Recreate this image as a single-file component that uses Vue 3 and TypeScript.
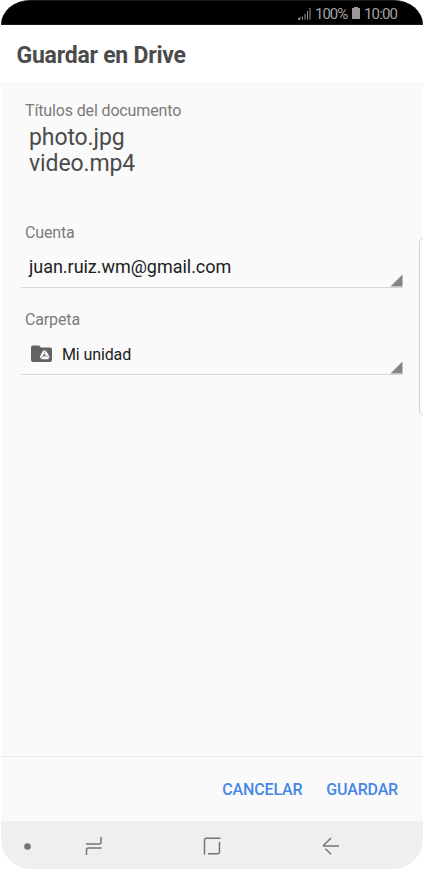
<script setup lang="ts">
const files: string[] = ['photo.jpg', 'video.mp4']
const account = 'juan.ruiz.wm@gmail.com'
const folder = 'Mi unidad'
</script>

<template>
  <div class="screen">
    <div class="status">
      <svg class="signal" width="13" height="13" viewBox="0 0 13 13">
        <path d="M0 12.500h2v-2zM4.500 12.500V9.500M7 12.500V7M9.500 12.500V4M12 12.500V1" />
      </svg>
      <span class="percent">100%</span>
      <svg class="battery" width="8" height="12" viewBox="0 0 8 12">
        <path d="M2 0h4v1H8V12H0V1h2z" />
      </svg>
      <span class="clock">10:00</span>
    </div>
    <header class="header"><h1>Guardar en Drive</h1></header>
    <main class="content">
      <section class="titles">
        <div class="label title-label">Títulos del documento</div>
        <div v-for="file in files" :key="file" class="file">{{ file }}</div>
      </section>
      <section class="group">
        <div class="label">Cuenta</div>
        <div class="spinner">
          <span class="account">{{ account }}</span>
          <svg class="corner" width="13" height="13" viewBox="0 0 13 13"><path d="M12.500 .5v12H.5z" /></svg>
        </div>
      </section>
      <section class="group">
        <div class="label">Carpeta</div>
        <div class="spinner folder-spinner">
          <svg class="folder-icon" width="22" height="18" viewBox="0 0 22 18">
            <path fill="#626262" d="M2 0.500h6l2 2H19a2 2 0 0 1 2 2V15a2 2 0 0 1-2 2h-17a2 2 0 0 1-2-2V2.500a2 2 0 0 1 2-2z" />
            <path fill="#fafafa" d="M12 5.500h3l3.700 6.300-1.500 2.500h-7L8.700 11.900z" />
            <path fill="#626262" d="M13.300 8.200l1.700 3h-3.400z" />
            <path stroke="#626262" stroke-width=".6" fill="none" d="M13.300 8.200l1.400-2.500M15 11.200h3.500M11.600 11.200l-1.600 2.700" />
          </svg>
          <span class="folder">{{ folder }}</span>
          <svg class="corner" width="13" height="13" viewBox="0 0 13 13"><path d="M12.500 .5v12H.5z" /></svg>
        </div>
      </section>
      <div class="edge-handle"></div>
    </main>
    <footer class="actions">
      <button type="button" class="cancel">CANCELAR</button>
      <button type="button" class="save">GUARDAR</button>
    </footer>
    <nav class="nav">
      <svg width="7" height="7" viewBox="0 0 7 7"><circle cx="3.500" cy="3.500" r="3.300" fill="#757575" /></svg>
      <svg class="recents" width="18" height="20" viewBox="0 0 18 20">
        <path d="M1 8h13q2 0 2-2V1M1.500 19v-5q0-2 2-2H16.500" />
      </svg>
      <svg class="home" width="18" height="18" viewBox="0 0 18 18">
        <path d="M1.500 17.500V3q0-1.700 1.700-1.700H17.500M5 16.700h9.800q1.700 0 1.700-1.700V5" />
      </svg>
      <svg class="back" width="18" height="18" viewBox="0 0 18 18">
        <path d="M9 1L1.700 8.300q-.8 .8 .2 .8H17M3.500 11.800L9 17.200" />
      </svg>
    </nav>
  </div>
</template>

<style>
body { background: #fff; }
</style>

<style scoped>
.screen {
  width: 423px;
  height: 870px;
  box-sizing: border-box;
  padding: 0 0 1px 1px;
  display: flex;
  flex-direction: column;
  font-family: Roboto, sans-serif;
  overflow: hidden;
  background: #fff;
}
.status {
  height: 25px;
  box-sizing: border-box;
  border: solid #1c1c1c;
  border-width: 1px 0;
  border-radius: 29px 29px 0 0 / 25px 25px 0 0;
  background: #000;
  color: #a3a3a3;
  display: flex;
  align-items: center;
  padding: 2px 25px 0 297px;
  font-size: 15px;
  white-space: nowrap;
}
.signal { flex: none; margin-top: -1px; fill: #999; stroke: #999; stroke-width: 1; }
.percent { flex: none; margin-left: 4px; width: 33px; letter-spacing: -1px; }
.battery { flex: none; margin-left: 4px; margin-top: -1px; fill: #999; }
.clock { margin-left: 4px; letter-spacing: -.85px; }
.header { height: 57px; flex: none; padding-left: 15.500px; background: #fff; }
h1 { margin: 0; color: #4b4b4b; font-size: 23px; line-height: 61px; font-weight: 700; letter-spacing: -.23px; }
.content { position: relative; flex: 1; overflow: hidden; background: #fafafa; padding: 19px 20px 0; }
.label { padding-left: 4px; color: #7b7b7b; font-size: 16px; line-height: 20px; letter-spacing: -.14px; }
.titles { height: 122px; }
.title-label { margin-bottom: 3px; }
.file { padding-left: 8px; color: #4b4b4b; font-size: 23px; line-height: 27px; letter-spacing: -.1px; }
.file + .file { line-height: 26px; }
.group { height: 87px; }
.spinner { position: relative; display: flex; align-items: center; height: 45px; box-sizing: border-box; border-bottom: 1px solid #d8d8d8; padding-top: 3px; color: #202020; }
.folder-spinner { padding-top: 4px; }
.account { padding-left: 8px; font-size: 18px; letter-spacing: -.03px; }
.corner { position: absolute; right: 0; bottom: 0; fill: #858585; }
.folder-icon { margin-left: 10px; }
.folder { margin-left: 9px; font-size: 16px; letter-spacing: -.12px; }
.edge-handle { position: absolute; right: -5px; top: 155px; width: 9px; height: 179px; box-sizing: border-box; border: 1px solid #d0d0d0; border-radius: 6px 0 0 6px; background: #fcfcfc; }
.actions { height: 65px; box-sizing: border-box; flex: none; border-top: 1px solid #ececec; background: #fafafa; display: flex; align-items: center; justify-content: flex-end; padding: 1px 25px 0 0; gap: 24px; }
button { border: 0; padding: 0; background: none; color: #4686e6; font: 500 16px Roboto, sans-serif; letter-spacing: -.17px; }
.nav { height: 48px; flex: none; background: #efefef; border-radius: 0 0 30px 30px; display: flex; align-items: center; padding: 2px 0 0 23px; box-sizing: border-box; }
.nav path { fill: none; stroke: #757575; stroke-width: 1.500; }
.recents { margin-left: 54px; }
.home { margin-left: 100px; }
.back { margin-left: 101px; }
</style>
